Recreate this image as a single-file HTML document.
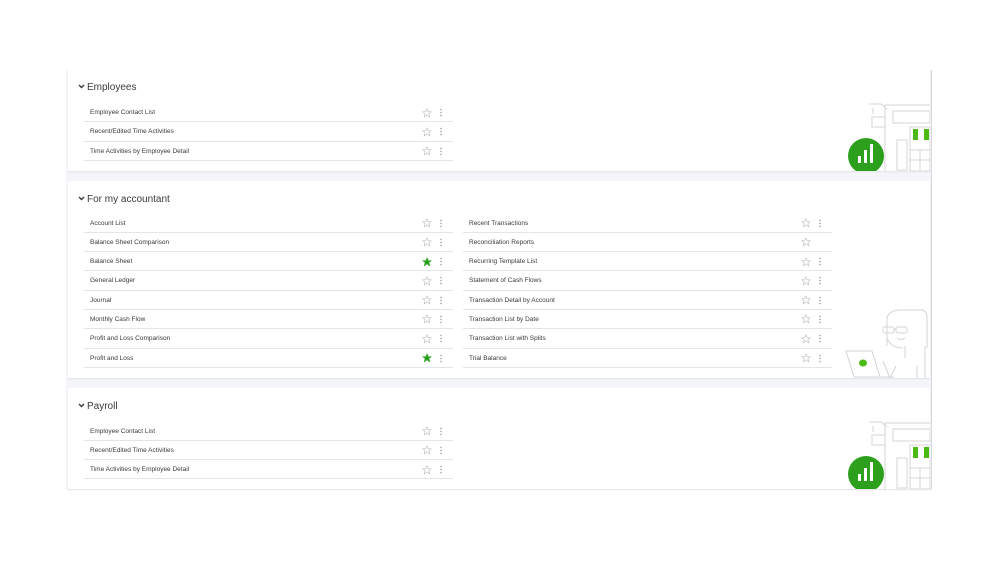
<!DOCTYPE html>
<html><head><meta charset="utf-8"><style>
*{margin:0;padding:0;box-sizing:border-box}
body{width:999px;height:562px;background:#fff;position:relative;overflow:hidden;font-family:"Liberation Sans",sans-serif;color:#393a3d}
.bg{position:absolute;left:66px;top:70px;width:866px;height:420px;background:#f4f5f8;border-right:1px solid #d4d7dc}
.card{position:absolute;left:68px;width:862px;background:#fff;box-shadow:0 1px 1px #e0e2e6;overflow:hidden}
h2{position:absolute;left:10px;font-size:10px;font-weight:normal;color:#393a3d}
h2 svg{width:7px;height:5px;margin-right:2px;vertical-align:1px}
.col{position:absolute;width:369px}
.row{height:19.3px;border-bottom:1px solid #e3e5e8;position:relative;font-size:6.5px;line-height:20px;padding-left:6px;color:#393a3d}
.st{position:absolute;right:21px;top:4.5px;width:10px;height:10px}
.dt{position:absolute;right:11px;top:5px;width:2px;height:9px;background:radial-gradient(circle,#aaa 0.7px,transparent 0.9px) 0 0/2px 3px repeat-y}
.ill{position:absolute;right:0}
</style></head><body>
<div class="bg"></div>

<div class="card" style="top:70px;height:101px">
 <h2 style="top:12px"><svg viewBox="0 0 7 5"><path d="M1 1l2.5 2.5L6 1" fill="none" stroke="#393a3d" stroke-width="1.4"/></svg>Employees</h2>
 <div class="col" style="left:16px;top:33px">
  <div class="row">Employee Contact List<svg class="st" viewBox="0 0 24 24"><path d="M12 2l3 7h7l-5.5 4.5 2 7.5-6.5-4.5-6.5 4.5 2-7.5L2 9h7z" fill="none" stroke="#bbb" stroke-width="1.4"/></svg><i class="dt"></i></div>
  <div class="row">Recent/Edited Time Activities<svg class="st" viewBox="0 0 24 24"><path d="M12 2l3 7h7l-5.5 4.5 2 7.5-6.5-4.5-6.5 4.5 2-7.5L2 9h7z" fill="none" stroke="#bbb" stroke-width="1.4"/></svg><i class="dt"></i></div>
  <div class="row">Time Activities by Employee Detail<svg class="st" viewBox="0 0 24 24"><path d="M12 2l3 7h7l-5.5 4.5 2 7.5-6.5-4.5-6.5 4.5 2-7.5L2 9h7z" fill="none" stroke="#bbb" stroke-width="1.4"/></svg><i class="dt"></i></div>
 </div>
 <svg class="ill" style="top:30px" width="85" height="71" viewBox="0 0 85 71" fill="none" stroke="#d4d4d4" stroke-width="1">
  <path d="M40 71V5h45M24 4h12l6 5M28 8v6M27 17h13v10H27z M48 11h37v12H48z M52 40h10v30H52z M65 27h20v44H65z M65 50h20M65 60h20M75 50v21"/>
  <rect x="68" y="29" width="5" height="11" fill="#4cba15" stroke="none"/><rect x="79" y="29" width="5" height="11" fill="#4cba15" stroke="none"/>
  <circle cx="21" cy="56" r="18" fill="#2ca01c" stroke="none"/>
  <rect x="13" y="56" width="3" height="7" fill="#fff" stroke="none"/><rect x="19" y="50" width="3" height="13" fill="#fff" stroke="none"/><rect x="25" y="44" width="3" height="19" fill="#fff" stroke="none"/>
 </svg>
</div>

<div class="card" style="top:181px;height:197px">
 <h2 style="top:13px"><svg viewBox="0 0 7 5"><path d="M1 1l2.5 2.5L6 1" fill="none" stroke="#393a3d" stroke-width="1.4"/></svg>For my accountant</h2>
 <div class="col" style="left:16px;top:32.5px">
  <div class="row">Account List<svg class="st" viewBox="0 0 24 24"><path d="M12 2l3 7h7l-5.5 4.5 2 7.5-6.5-4.5-6.5 4.5 2-7.5L2 9h7z" fill="none" stroke="#bbb" stroke-width="1.4"/></svg><i class="dt"></i></div>
  <div class="row">Balance Sheet Comparison<svg class="st" viewBox="0 0 24 24"><path d="M12 2l3 7h7l-5.5 4.5 2 7.5-6.5-4.5-6.5 4.5 2-7.5L2 9h7z" fill="none" stroke="#bbb" stroke-width="1.4"/></svg><i class="dt"></i></div>
  <div class="row">Balance Sheet<svg class="st" viewBox="0 0 24 24"><path d="M12 2l3 7h7l-5.5 4.5 2 7.5-6.5-4.5-6.5 4.5 2-7.5L2 9h7z" fill="#2ca01c" stroke="#2ca01c" stroke-width="1.4"/></svg><i class="dt"></i></div>
  <div class="row">General Ledger<svg class="st" viewBox="0 0 24 24"><path d="M12 2l3 7h7l-5.5 4.5 2 7.5-6.5-4.5-6.5 4.5 2-7.5L2 9h7z" fill="none" stroke="#bbb" stroke-width="1.4"/></svg><i class="dt"></i></div>
  <div class="row">Journal<svg class="st" viewBox="0 0 24 24"><path d="M12 2l3 7h7l-5.5 4.5 2 7.5-6.5-4.5-6.5 4.5 2-7.5L2 9h7z" fill="none" stroke="#bbb" stroke-width="1.4"/></svg><i class="dt"></i></div>
  <div class="row">Monthly Cash Flow<svg class="st" viewBox="0 0 24 24"><path d="M12 2l3 7h7l-5.5 4.5 2 7.5-6.5-4.5-6.5 4.5 2-7.5L2 9h7z" fill="none" stroke="#bbb" stroke-width="1.4"/></svg><i class="dt"></i></div>
  <div class="row">Profit and Loss Comparison<svg class="st" viewBox="0 0 24 24"><path d="M12 2l3 7h7l-5.5 4.5 2 7.5-6.5-4.5-6.5 4.5 2-7.5L2 9h7z" fill="none" stroke="#bbb" stroke-width="1.4"/></svg><i class="dt"></i></div>
  <div class="row">Profit and Loss<svg class="st" viewBox="0 0 24 24"><path d="M12 2l3 7h7l-5.5 4.5 2 7.5-6.5-4.5-6.5 4.5 2-7.5L2 9h7z" fill="#2ca01c" stroke="#2ca01c" stroke-width="1.4"/></svg><i class="dt"></i></div>
 </div>
 <div class="col" style="left:395px;top:32.5px">
  <div class="row">Recent Transactions<svg class="st" viewBox="0 0 24 24"><path d="M12 2l3 7h7l-5.5 4.5 2 7.5-6.5-4.5-6.5 4.5 2-7.5L2 9h7z" fill="none" stroke="#bbb" stroke-width="1.4"/></svg><i class="dt"></i></div>
  <div class="row">Reconciliation Reports<svg class="st" viewBox="0 0 24 24"><path d="M12 2l3 7h7l-5.5 4.5 2 7.5-6.5-4.5-6.5 4.5 2-7.5L2 9h7z" fill="none" stroke="#bbb" stroke-width="1.4"/></svg></div>
  <div class="row">Recurring Template List<svg class="st" viewBox="0 0 24 24"><path d="M12 2l3 7h7l-5.5 4.5 2 7.5-6.5-4.5-6.5 4.5 2-7.5L2 9h7z" fill="none" stroke="#bbb" stroke-width="1.4"/></svg><i class="dt"></i></div>
  <div class="row">Statement of Cash Flows<svg class="st" viewBox="0 0 24 24"><path d="M12 2l3 7h7l-5.5 4.5 2 7.5-6.5-4.5-6.5 4.5 2-7.5L2 9h7z" fill="none" stroke="#bbb" stroke-width="1.4"/></svg><i class="dt"></i></div>
  <div class="row">Transaction Detail by Account<svg class="st" viewBox="0 0 24 24"><path d="M12 2l3 7h7l-5.5 4.5 2 7.5-6.5-4.5-6.5 4.5 2-7.5L2 9h7z" fill="none" stroke="#bbb" stroke-width="1.4"/></svg><i class="dt"></i></div>
  <div class="row">Transaction List by Date<svg class="st" viewBox="0 0 24 24"><path d="M12 2l3 7h7l-5.5 4.5 2 7.5-6.5-4.5-6.5 4.5 2-7.5L2 9h7z" fill="none" stroke="#bbb" stroke-width="1.4"/></svg><i class="dt"></i></div>
  <div class="row">Transaction List with Splits<svg class="st" viewBox="0 0 24 24"><path d="M12 2l3 7h7l-5.5 4.5 2 7.5-6.5-4.5-6.5 4.5 2-7.5L2 9h7z" fill="none" stroke="#bbb" stroke-width="1.4"/></svg><i class="dt"></i></div>
  <div class="row">Trial Balance<svg class="st" viewBox="0 0 24 24"><path d="M12 2l3 7h7l-5.5 4.5 2 7.5-6.5-4.5-6.5 4.5 2-7.5L2 9h7z" fill="none" stroke="#bbb" stroke-width="1.4"/></svg><i class="dt"></i></div>
 </div>
 <svg class="ill" style="top:125px" width="85" height="72" viewBox="0 0 85 72" fill="none" stroke="#d4d4d4" stroke-width="1">
  <path d="M42 40V12q2-8 14-8h20q6 0 6 8v30M42 32q4 10 16 10M60 40v12M80 40v32M72 60v12"/>
  <rect x="38" y="21" width="11" height="6" rx="2"/><rect x="51" y="21" width="11" height="6" rx="2"/><path d="M49 23h2M52 32q4 3 8 0"/>
  <path d="M1 45h26l8 26H9zM9 71h40M38 55l7 17 6-12"/>
  <ellipse cx="18" cy="57" rx="4" ry="3.5" fill="#4cba15" stroke="none"/>
 </svg>
</div>

<div class="card" style="top:388px;height:101px">
 <h2 style="top:13px"><svg viewBox="0 0 7 5"><path d="M1 1l2.5 2.5L6 1" fill="none" stroke="#393a3d" stroke-width="1.4"/></svg>Payroll</h2>
 <div class="col" style="left:16px;top:33.5px">
  <div class="row">Employee Contact List<svg class="st" viewBox="0 0 24 24"><path d="M12 2l3 7h7l-5.5 4.5 2 7.5-6.5-4.5-6.5 4.5 2-7.5L2 9h7z" fill="none" stroke="#bbb" stroke-width="1.4"/></svg><i class="dt"></i></div>
  <div class="row">Recent/Edited Time Activities<svg class="st" viewBox="0 0 24 24"><path d="M12 2l3 7h7l-5.5 4.5 2 7.5-6.5-4.5-6.5 4.5 2-7.5L2 9h7z" fill="none" stroke="#bbb" stroke-width="1.4"/></svg><i class="dt"></i></div>
  <div class="row">Time Activities by Employee Detail<svg class="st" viewBox="0 0 24 24"><path d="M12 2l3 7h7l-5.5 4.5 2 7.5-6.5-4.5-6.5 4.5 2-7.5L2 9h7z" fill="none" stroke="#bbb" stroke-width="1.4"/></svg><i class="dt"></i></div>
 </div>
 <svg class="ill" style="top:30px" width="85" height="71" viewBox="0 0 85 71" fill="none" stroke="#d4d4d4" stroke-width="1">
  <path d="M40 71V5h45M24 4h12l6 5M28 8v6M27 17h13v10H27z M48 11h37v12H48z M52 40h10v30H52z M65 27h20v44H65z M65 50h20M65 60h20M75 50v21"/>
  <rect x="68" y="29" width="5" height="11" fill="#4cba15" stroke="none"/><rect x="79" y="29" width="5" height="11" fill="#4cba15" stroke="none"/>
  <circle cx="21" cy="56" r="18" fill="#2ca01c" stroke="none"/>
  <rect x="13" y="56" width="3" height="7" fill="#fff" stroke="none"/><rect x="19" y="50" width="3" height="13" fill="#fff" stroke="none"/><rect x="25" y="44" width="3" height="19" fill="#fff" stroke="none"/>
 </svg>
</div>
</body></html>
